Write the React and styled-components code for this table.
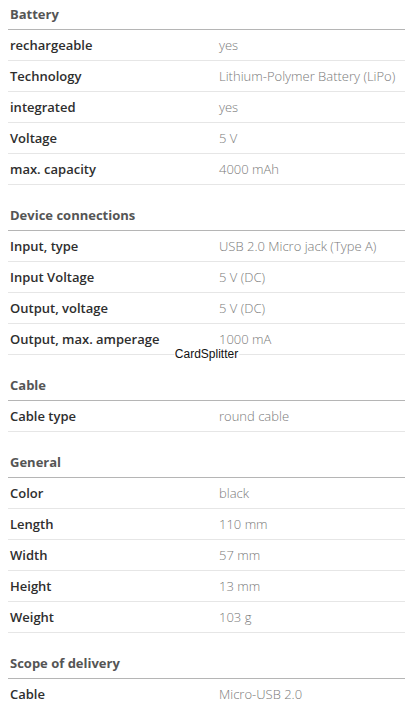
import React from "react";
import styled, { createGlobalStyle } from "styled-components";

const Global = createGlobalStyle`
  html, body { margin: 0; padding: 0; background: #fff; }
  body { font-family: "Open Sans", "Liberation Sans", sans-serif; }
`;

const Page = styled.div`
  position: relative;
  padding: 0 8px;
  width: 397px;
`;

const Section = styled.section`
  margin-top: ${(p) => (p.$first ? "-1px" : "15px")};
`;

const Header = styled.h3`
  margin: 0;
  height: 30px;
  display: flex;
  align-items: center;
  padding-left: 2px;
  font-size: 13px;
  font-weight: 700;
  color: #555;
  border-bottom: 1px solid #b5b5b5;
`;

const Row = styled.div`
  position: relative;
  display: grid;
  grid-template-columns: 209px 1fr;
  align-items: center;
  height: 30px;
  padding-left: 2px;
  border-bottom: 1px solid #e6e6e6;
`;

const Label = styled.span`
  font-size: 13px;
  font-weight: 600;
  color: #2e2e2e;
  white-space: nowrap;
`;

const Value = styled.span`
  font-size: 13px;
  font-weight: 300;
  color: #7a7a7a;
  white-space: nowrap;
`;

const Splitter = styled.span`
  position: absolute;
  left: 50%;
  bottom: -8px;
  transform: translateX(-50%);
  background: #fff;
  padding: 0 1px;
  font-family: "Liberation Sans", Arial, sans-serif;
  font-size: 12px;
  line-height: 15px;
  color: #111;
`;

const data = [
  {
    title: "Battery",
    rows: [
      ["rechargeable", "yes"],
      ["Technology", "Lithium-Polymer Battery (LiPo)"],
      ["integrated", "yes"],
      ["Voltage", "5 V"],
      ["max. capacity", "4000 mAh"],
    ],
  },
  {
    title: "Device connections",
    rows: [
      ["Input, type", "USB 2.0 Micro jack (Type A)"],
      ["Input Voltage", "5 V (DC)"],
      ["Output, voltage", "5 V (DC)"],
      ["Output, max. amperage", "1000 mA", true],
    ],
  },
  {
    title: "Cable",
    rows: [["Cable type", "round cable"]],
  },
  {
    title: "General",
    rows: [
      ["Color", "black"],
      ["Length", "110 mm"],
      ["Width", "57 mm"],
      ["Height", "13 mm"],
      ["Weight", "103 g"],
    ],
  },
  {
    title: "Scope of delivery",
    rows: [["Cable", "Micro-USB 2.0"]],
  },
];

export default function App() {
  return (
    <>
      <Global />
      <Page>
        {data.map((s, i) => (
          <Section key={s.title} $first={i === 0}>
            <Header>{s.title}</Header>
            {s.rows.map(([l, v, split]) => (
              <Row key={l}>
                <Label>{l}</Label>
                <Value>{v}</Value>
                {split && <Splitter>CardSplitter</Splitter>}
              </Row>
            ))}
          </Section>
        ))}
      </Page>
    </>
  );
}
